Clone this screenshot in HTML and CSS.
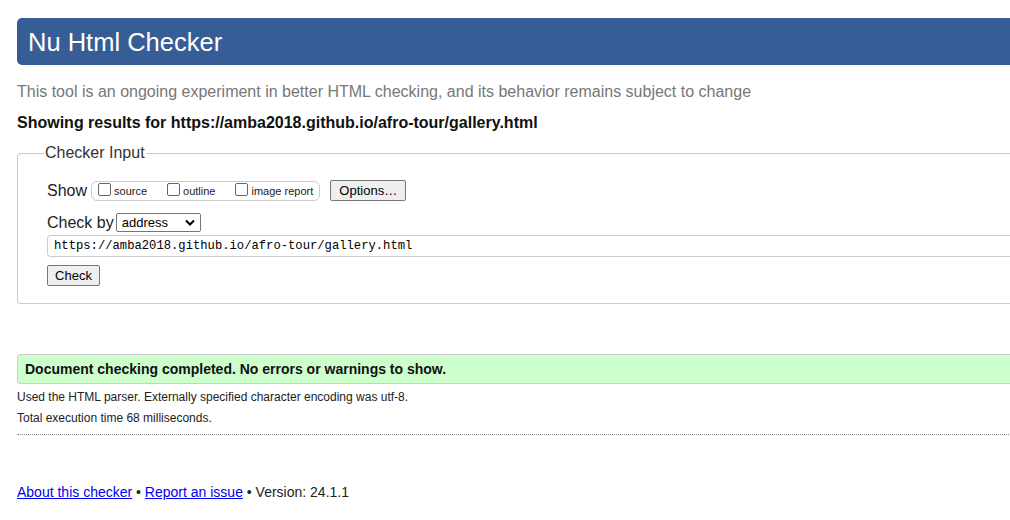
FILE: index.html
```html
<!DOCTYPE html>
<html lang="en">
<head>
<meta charset="utf-8">
<title>Nu Html Checker</title>
<link rel="stylesheet" href="styles.css">
</head>
<body>
<div class="page">
  <h1 class="title">Nu Html Checker</h1>
  <p class="intro">This tool is an ongoing experiment in better HTML checking, and its behavior remains subject to change</p>
  <p class="showing">Showing results for https://amba2018.github.io/afro-tour/gallery.html</p>
  <fieldset class="input-box">
    <legend class="legend">Checker Input</legend>
    <div class="row show-row">
      <span class="row-label">Show</span>
      <span class="opts">
        <label class="opt"><span class="cb"></span>source</label>
        <label class="opt"><span class="cb"></span>outline</label>
        <label class="opt"><span class="cb"></span>image report</label>
      </span>
      <span class="btn btn-options">Options…</span>
    </div>
    <div class="row by-row">
      <span class="row-label">Check by</span>
      <span class="select">address<svg class="chev" width="10" height="7" viewBox="0 0 10 7"><path d="M1 1.5 L5 5.5 L9 1.5" fill="none" stroke="#000" stroke-width="2"/></svg></span>
    </div>
    <div class="url">https://amba2018.github.io/afro-tour/gallery.html</div>
    <div class="row"><span class="btn btn-check">Check</span></div>
  </fieldset>
  <div class="success">Document checking completed. No errors or warnings to show.</div>
  <p class="details">Used the HTML parser. Externally specified character encoding was utf-8.</p>
  <p class="details">Total execution time 68 milliseconds.</p>
  <hr class="dots">
  <p class="footer"><a href="#">About this checker</a> • <a href="#">Report an issue</a> • Version: 24.1.1</p>
</div>
</body>
</html>
```
FILE: styles.css
```css
html { overflow: hidden; }
body {
  margin: 0;
  font-family: "Liberation Sans", Arial, sans-serif;
  color: #000;
  background: #fff;
}
.page {
  width: 1100px;
  padding: 18px 0 0 17px;
}
.title {
  margin: 0;
  height: 47px;
  box-sizing: border-box;
  padding: 9px 0 0 11px;
  background: #365d95;
  color: #fff;
  font-size: 25.5px;
  font-weight: normal;
  line-height: 30px;
  border-radius: 5px 0 0 5px;
}
.intro {
  margin: 17px 0 0;
  color: #777;
  font-size: 16px;
  line-height: 20px;
}
.showing {
  margin: 11px 0 0;
  font-size: 16px;
  font-weight: bold;
  line-height: 20px;
  color: #111;
}
.input-box {
  margin: 11px 0 0;
  padding: 6px 0 17px 29px;
  border: 1px solid #ccc;
  border-radius: 4px 0 0 4px;
  border-right: none;
  min-width: 0;
}
.legend {
  padding: 0 1px;
  margin-left: -3px;
  font-size: 16px;
  color: #333;
}
.row {
  display: flex;
  align-items: center;
}
.row-label {
  font-size: 16px;
  color: #222;
}
.show-row { margin-top: 12px; }
.opts {
  display: flex;
  align-items: center;
  margin-left: 4px;
  height: 18px;
  padding: 0 6px 0 6px;
  border: 1px solid #ccc;
  border-radius: 6px;
  font-size: 11px;
  color: #222;
}
.opt {
  display: flex;
  align-items: center;
  margin-right: 20px;
}
.opt:last-child { margin-right: 0; }
.cb {
  width: 13px;
  height: 13px;
  box-sizing: border-box;
  border: 1px solid #666;
  border-radius: 2px;
  margin: -2px 3px 0 0;
  background: #fff;
}
.btn {
  box-sizing: border-box;
  display: inline-flex;
  align-items: center;
  justify-content: center;
  height: 21px;
  border: 1px solid #767676;
  border-radius: 2px;
  background: #efefef;
  font-size: 13px;
  color: #000;
}
.btn-options {
  margin-left: 10px;
  width: 76px;
}
.by-row { margin-top: 12px; }
.select {
  box-sizing: border-box;
  display: inline-flex;
  align-items: center;
  justify-content: space-between;
  width: 85px;
  height: 19px;
  margin-left: 2px;
  padding: 0 5px 0 5px;
  border: 1px solid #767676;
  border-radius: 2px;
  font-size: 13px;
  color: #000;
}
.chev { display: block; }
.url {
  margin-top: 3px;
  height: 22px;
  box-sizing: border-box;
  border: 1px solid #ccc;
  border-right: none;
  border-radius: 4px 0 0 4px;
  padding: 3px 0 0 6px;
  font-family: "Liberation Mono", "DejaVu Sans Mono", monospace;
  font-size: 12.2px;
  line-height: 15px;
  color: #000;
}
.url + .row { margin-top: 8px; }
.btn-check { width: 53px; }
.success {
  margin-top: 50px;
  height: 30px;
  box-sizing: border-box;
  padding: 0 0 0 7px;
  display: flex;
  align-items: center;
  background: #ccffcc;
  border: 1px solid #ccc;
  border-right: none;
  border-radius: 4px 0 0 4px;
  font-size: 14px;
  font-weight: bold;
  color: #111;
}
.details {
  margin: 6px 0 0;
  font-size: 12px;
  line-height: 15px;
  color: #222;
}
.details + .details { margin-top: 6px; }
.dots {
  margin: 8px 0 0;
  border: none;
  border-top: 1px dotted #888;
  height: 0;
}
.footer {
  margin: 49px 0 0;
  font-size: 14px;
  line-height: 16px;
  color: #222;
}
.footer a { color: #00e; }
```
